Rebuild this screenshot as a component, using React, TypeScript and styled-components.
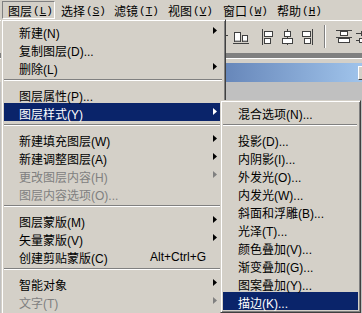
import React from 'react';
import styled, { createGlobalStyle } from 'styled-components';

const GlobalStyle = createGlobalStyle`
  html, body {
    margin: 0;
    padding: 0;
    background: #d4d0c8;
    overflow: hidden;
  }
  body {
    font-family: "Liberation Sans", "Noto Sans CJK SC", sans-serif;
    font-size: 12px;
  }
`;

const Screen = styled.div`
  position: relative;
  width: 362px;
  height: 313px;
  overflow: hidden;
  background: #d4d0c8;
`;

/* ---------- menu bar ---------- */

const MenuBar = styled.div`
  display: flex;
  height: 20px;
  box-sizing: border-box;
  padding: 1px 0 0 2px;
`;

const BarItem = styled.div<{ $w: number; $open?: boolean }>`
  width: ${(p) => p.$w}px;
  height: 18px;
  box-sizing: border-box;
  display: flex;
  align-items: center;
  padding: 1px 0 0 5px;
  border: 1px solid transparent;
  border-color: ${(p) => (p.$open ? '#808080 #fff #fff #808080' : 'transparent')};
  color: #000;
  white-space: nowrap;
`;

const Acc = styled.span`
  font-family: "Liberation Mono", monospace;
  font-size: 11px;
  margin-left: 1px;

  u {
    text-underline-offset: 1px;
  }
`;

/* ---------- toolbar + workspace ---------- */

const Toolbar = styled.div`
  display: flex;
  align-items: center;
  height: 33px;
  box-sizing: border-box;
  border-top: 1px solid #fff;
  padding: 0 0 1px 212px;
`;

const Tool = styled.div<{ $ml?: number }>`
  flex: none;
  display: flex;
  margin-left: ${(p) => p.$ml ?? 0}px;
`;

const ToolSep = styled.div<{ $ml?: number }>`
  flex: none;
  width: 1px;
  height: 23px;
  margin-left: ${(p) => p.$ml ?? 0}px;
  background: #808080;
  border-right: 1px solid #fff;
`;

const Workspace = styled.div`
  background: #808080;
  padding-top: 5px;
  height: 260px;
`;

const DocWindow = styled.div`
  width: 380px;
  background: #d4d0c8;
  border-top: 1px solid #fff;
  padding-top: 4px;
`;

const Caption = styled.div`
  display: flex;
  align-items: center;
  justify-content: flex-end;
  height: 19px;
  margin: 0 4px;
  padding-right: 2px;
  background: linear-gradient(to right, #0a246a, #a6caf0);
`;

const CaptionButton = styled.div`
  width: 16px;
  height: 14px;
  box-sizing: border-box;
  background: #d4d0c8;
  border: 1px solid;
  border-color: #fff #404040 #404040 #fff;
`;

const Canvas = styled.div`
  height: 240px;
  background: #c0c0c0;
`;

/* ---------- menus ---------- */

const Menu = styled.div<{ $left: number; $top: number; $w: number; $minH?: number }>`
  position: absolute;
  left: ${(p) => p.$left}px;
  top: ${(p) => p.$top}px;
  width: ${(p) => p.$w}px;
  min-height: ${(p) => (p.$minH ? `${p.$minH}px` : 'auto')};
  box-sizing: border-box;
  background: #d4d0c8;
  border: 1px solid;
  border-color: #d4d0c8 #404040 #404040 #d4d0c8;
  box-shadow: inset 1px 1px 0 #fff, inset -1px -1px 0 #808080;
  padding: 2px;
  z-index: 2;
`;

const Item = styled.div<{ $active?: boolean; $disabled?: boolean }>`
  display: flex;
  align-items: center;
  height: 18px;
  box-sizing: border-box;
  padding: 2px 6px 0 15px;
  white-space: nowrap;
  color: ${(p) => (p.$active ? '#fff' : p.$disabled ? '#808080' : '#000')};
  background: ${(p) => (p.$active ? '#0a246a' : 'transparent')};
`;

const Shortcut = styled.span`
  margin-left: auto;
  margin-right: 11px;
`;

const ArrowBox = styled.svg`
  margin-left: auto;
  margin-bottom: 3px;
  flex: none;
`;

const Separator = styled.div`
  height: 2px;
  margin: 3px 1px 4px 0;
  border-top: 1px solid #808080;
  border-bottom: 1px solid #fff;
  box-sizing: border-box;
`;

type Entry =
  | { sep: true }
  | {
      label: string;
      arrow?: boolean;
      active?: boolean;
      disabled?: boolean;
      shortcut?: string;
    };

const layerMenu: Entry[] = [
  { label: '新建(N)', arrow: true },
  { label: '复制图层(D)...' },
  { label: '删除(L)', arrow: true },
  { sep: true },
  { label: '图层属性(P)...' },
  { label: '图层样式(Y)', arrow: true, active: true },
  { sep: true },
  { label: '新建填充图层(W)', arrow: true },
  { label: '新建调整图层(A)', arrow: true },
  { label: '更改图层内容(H)', arrow: true, disabled: true },
  { label: '图层内容选项(O)...', disabled: true },
  { sep: true },
  { label: '图层蒙版(M)', arrow: true },
  { label: '矢量蒙版(V)', arrow: true },
  { label: '创建剪贴蒙版(C)', shortcut: 'Alt+Ctrl+G' },
  { sep: true },
  { label: '智能对象', arrow: true },
  { label: '文字(T)', arrow: true, disabled: true },
];

const styleMenu: Entry[] = [
  { label: '混合选项(N)...' },
  { sep: true },
  { label: '投影(D)...' },
  { label: '内阴影(I)...' },
  { label: '外发光(O)...' },
  { label: '内发光(W)...' },
  { label: '斜面和浮雕(B)...' },
  { label: '光泽(T)...' },
  { label: '颜色叠加(V)...' },
  { label: '渐变叠加(G)...' },
  { label: '图案叠加(Y)...' },
  { label: '描边(K)...', active: true },
];

const Arrow = ({ color }: { color: string }) => (
  <ArrowBox width="4" height="7" viewBox="0 0 4 7">
    <polygon points="0,0 4,3.5 0,7" fill={color} />
  </ArrowBox>
);

const MenuList = ({ items }: { items: Entry[] }) => (
  <>
    {items.map((it, i) => {
      if ('sep' in it) return <Separator key={i} />;
      const c = it.active ? '#fff' : it.disabled ? '#808080' : '#000';
      return (
        <Item key={i} $active={it.active} $disabled={it.disabled}>
          <span>{it.label}</span>
          {it.shortcut && <Shortcut>{it.shortcut}</Shortcut>}
          {it.arrow && <Arrow color={c} />}
        </Item>
      );
    })}
  </>
);

/* ---------- toolbar icons ---------- */

const box = { fill: '#fff', stroke: '#404040', strokeWidth: 1 };

const IconHidden = () => (
  <svg width="16" height="16" viewBox="0 0 16 16">
    <line x1="0" y1="6.5" x2="16" y2="6.5" stroke="#404040" />
    <rect x="4.5" y="1.5" width="6" height="10" {...box} />
  </svg>
);

const IconAlignBottom = () => (
  <svg width="16" height="16" viewBox="0 0 16 16">
    <rect x="1.5" y="3.5" width="6" height="9" {...box} />
    <line x1="2" y1="12" x2="7" y2="12" stroke="#808080" />
    <rect x="9.5" y="6.5" width="5" height="6" {...box} />
    <line x1="10" y1="12" x2="14" y2="12" stroke="#808080" />
    <line x1="0" y1="14.5" x2="16" y2="14.5" stroke="#404040" />
  </svg>
);

const IconAlignLeft = () => (
  <svg width="14" height="16" viewBox="0 0 14 16">
    <line x1="1.5" y1="0" x2="1.5" y2="16" stroke="#404040" />
    <rect x="3.5" y="2.5" width="8" height="5" {...box} />
    <rect x="3.5" y="9.5" width="6" height="5" {...box} />
  </svg>
);

const IconAlignCenter = () => (
  <svg width="14" height="16" viewBox="0 0 14 16">
    <line x1="6.5" y1="0" x2="6.5" y2="16" stroke="#404040" />
    <rect x="3.5" y="2.5" width="6" height="5" {...box} />
    <rect x="1.5" y="9.5" width="10" height="5" {...box} />
  </svg>
);

const IconAlignRight = () => (
  <svg width="14" height="16" viewBox="0 0 14 16">
    <line x1="11.5" y1="0" x2="11.5" y2="16" stroke="#404040" />
    <rect x="1.5" y="2.5" width="8" height="5" {...box} />
    <rect x="3.5" y="9.5" width="6" height="5" {...box} />
  </svg>
);

const IconDistTop = () => (
  <svg width="16" height="16" viewBox="0 0 16 16">
    <line x1="0" y1="1.5" x2="16" y2="1.5" stroke="#404040" />
    <rect x="4.5" y="2.5" width="7" height="4" {...box} />
    <line x1="0" y1="8.5" x2="16" y2="8.5" stroke="#404040" />
    <rect x="2.5" y="9.5" width="11" height="4" {...box} />
  </svg>
);

const IconDistCenter = () => (
  <svg width="16" height="16" viewBox="0 0 16 16">
    <line x1="0" y1="4.5" x2="16" y2="4.5" stroke="#404040" />
    <rect x="5.5" y="2.5" width="6" height="4" {...box} />
    <line x1="0" y1="11.5" x2="16" y2="11.5" stroke="#404040" />
    <rect x="3.5" y="9.5" width="10" height="4" {...box} />
  </svg>
);

const barItems: { zh: string; key: string; w: number }[] = [
  { zh: '图层', key: 'L', w: 53 },
  { zh: '选择', key: 'S', w: 53 },
  { zh: '滤镜', key: 'T', w: 54 },
  { zh: '视图', key: 'V', w: 55 },
  { zh: '窗口', key: 'W', w: 54 },
  { zh: '帮助', key: 'H', w: 53 },
];

const App: React.FC = () => (
  <Screen>
    <GlobalStyle />
    <MenuBar>
      {barItems.map((b, i) => (
        <BarItem key={b.key} $w={b.w} $open={i === 0}>
          {b.zh}
          <Acc>
            (<u>{b.key}</u>)
          </Acc>
        </BarItem>
      ))}
    </MenuBar>

    <Toolbar>
      <Tool>
        <IconHidden />
      </Tool>
      <Tool $ml={5}>
        <IconAlignBottom />
      </Tool>
      <Tool $ml={12}>
        <IconAlignLeft />
      </Tool>
      <Tool $ml={6}>
        <IconAlignCenter />
      </Tool>
      <Tool $ml={6}>
        <IconAlignRight />
      </Tool>
      <ToolSep $ml={9} />
      <Tool $ml={10}>
        <IconDistTop />
      </Tool>
      <Tool $ml={4}>
        <IconDistCenter />
      </Tool>
    </Toolbar>

    <Workspace>
      <DocWindow>
        <Caption>
          <CaptionButton />
        </Caption>
        <Canvas />
      </DocWindow>
    </Workspace>

    <Menu $left={1} $top={19} $w={225} $minH={320}>
      <MenuList items={layerMenu} />
    </Menu>
    <Menu $left={220} $top={100} $w={141}>
      <MenuList items={styleMenu} />
    </Menu>
  </Screen>
);

export default App;
